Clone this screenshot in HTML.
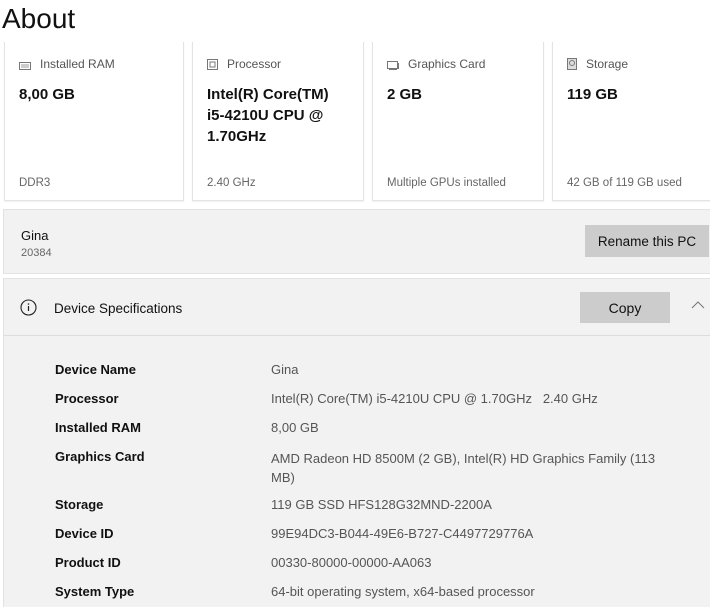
<!DOCTYPE html>
<html><head><style>
html,body{margin:0;width:710px;height:607px;overflow:hidden}
body{background:#fff;font-family:"Liberation Sans",sans-serif;position:relative;color:#000}
.a{position:absolute;white-space:nowrap}
.card{position:absolute;top:42px;height:158px;background:#fff;border:1px solid #e3e3e3;border-top:none;box-shadow:0 1px 1px rgba(0,0,0,.06)}
.lbl{position:absolute;left:14px;top:15px;font-size:12px;color:#555}
.lbl svg{vertical-align:-2px;margin-right:9px}
.big{position:absolute;left:14px;top:42px;font-size:15px;font-weight:bold;line-height:21px;color:#111}
.sub{position:absolute;left:14px;top:135px;font-size:11.5px;color:#666}
.k{left:55px;font-size:13px;font-weight:bold;color:#111}
.v{left:271px;font-size:13px;color:#555}
</style></head><body>
<div class="a" style="left:2px;top:3px;font-size:28px;color:#111">About</div>

<div class="card" style="left:4px;width:178px"><div class="lbl"><svg width="12" height="8"><rect x=".5" y=".5" width="11" height="7" fill="none" stroke="#777"/><path d="M2 3h8M2 5h8" stroke="#999"/></svg>Installed RAM</div><div class="big">8,00 GB</div><div class="sub">DDR3</div></div>
<div class="card" style="left:192px;width:170px"><div class="lbl"><svg width="11" height="11"><rect x=".5" y=".5" width="10" height="10" fill="none" stroke="#777"/><rect x="3" y="3" width="5" height="5" fill="none" stroke="#777"/></svg>Processor</div><div class="big">Intel(R) Core(TM)<br>i5-4210U CPU @<br>1.70GHz</div><div class="sub">2.40 GHz</div></div>
<div class="card" style="left:372px;width:170px"><div class="lbl"><svg width="12" height="9"><rect x=".5" y=".5" width="10" height="7" fill="none" stroke="#777"/><path d="M11.5 2v6M2 8.5h8" stroke="#777"/></svg>Graphics Card</div><div class="big">2 GB</div><div class="sub">Multiple GPUs installed</div></div>
<div class="card" style="left:552px;width:160px"><div class="lbl"><svg width="10" height="12"><rect x=".5" y=".5" width="9" height="11" fill="#ddd" stroke="#777"/><circle cx="5" cy="5" r="2.5" fill="none" stroke="#777"/></svg>Storage</div><div class="big">119 GB</div><div class="sub">42 GB of 119 GB used</div></div>

<div class="a" style="left:3px;top:209px;width:710px;height:63px;background:#f2f2f2;border:1px solid #e2e2e2"></div>
<div class="a" style="left:21px;top:228px;font-size:13px;color:#111">Gina</div>
<div class="a" style="left:21px;top:247px;font-size:11px;color:#666">20384</div>
<div class="a" style="left:585px;top:225px;width:124px;height:32px;background:#ccc;font-size:13.5px;line-height:33px;text-align:center;color:#111">Rename this PC</div>

<div class="a" style="left:3px;top:278px;width:710px;height:340px;background:#f2f2f2;border-left:1px solid #e2e2e2;border-top:1px solid #e2e2e2"></div>
<div class="a" style="left:4px;top:335px;width:708px;height:1px;background:#dcdcdc"></div>
<svg class="a" style="left:20px;top:299px" width="17" height="17"><circle cx="8.5" cy="8.5" r="7.5" fill="none" stroke="#222" stroke-width="1.1"/><path d="M8.5 7v5" stroke="#222" stroke-width="1.2"/><circle cx="8.5" cy="5" r=".8" fill="#222"/></svg>
<div class="a" style="left:54px;top:301px;font-size:13.5px;color:#111">Device Specifications</div>
<div class="a" style="left:580px;top:292px;width:90px;height:31px;background:#ccc;font-size:14px;line-height:32px;text-align:center;color:#111">Copy</div>
<svg class="a" style="left:691px;top:301px" width="14" height="8"><path d="M1 7l6-6 6 6" fill="none" stroke="#777"/></svg>

<div class="a k" style="top:362px">Device Name</div><div class="a v" style="top:362px">Gina</div>
<div class="a k" style="top:391px">Processor</div><div class="a v" style="top:391px">Intel(R) Core(TM) i5-4210U CPU @ 1.70GHz &nbsp; 2.40 GHz</div>
<div class="a k" style="top:420px">Installed RAM</div><div class="a v" style="top:420px">8,00 GB</div>
<div class="a k" style="top:449px">Graphics Card</div><div class="a v" style="top:449px;line-height:19px">AMD Radeon HD 8500M (2 GB), Intel(R) HD Graphics Family (113<br>MB)</div>
<div class="a k" style="top:497px">Storage</div><div class="a v" style="top:497px">119 GB SSD HFS128G32MND-2200A</div>
<div class="a k" style="top:526px">Device ID</div><div class="a v" style="top:526px">99E94DC3-B044-49E6-B727-C4497729776A</div>
<div class="a k" style="top:555px">Product ID</div><div class="a v" style="top:555px">00330-80000-00000-AA063</div>
<div class="a k" style="top:584px">System Type</div><div class="a v" style="top:584px">64-bit operating system, x64-based processor</div>
</body></html>
